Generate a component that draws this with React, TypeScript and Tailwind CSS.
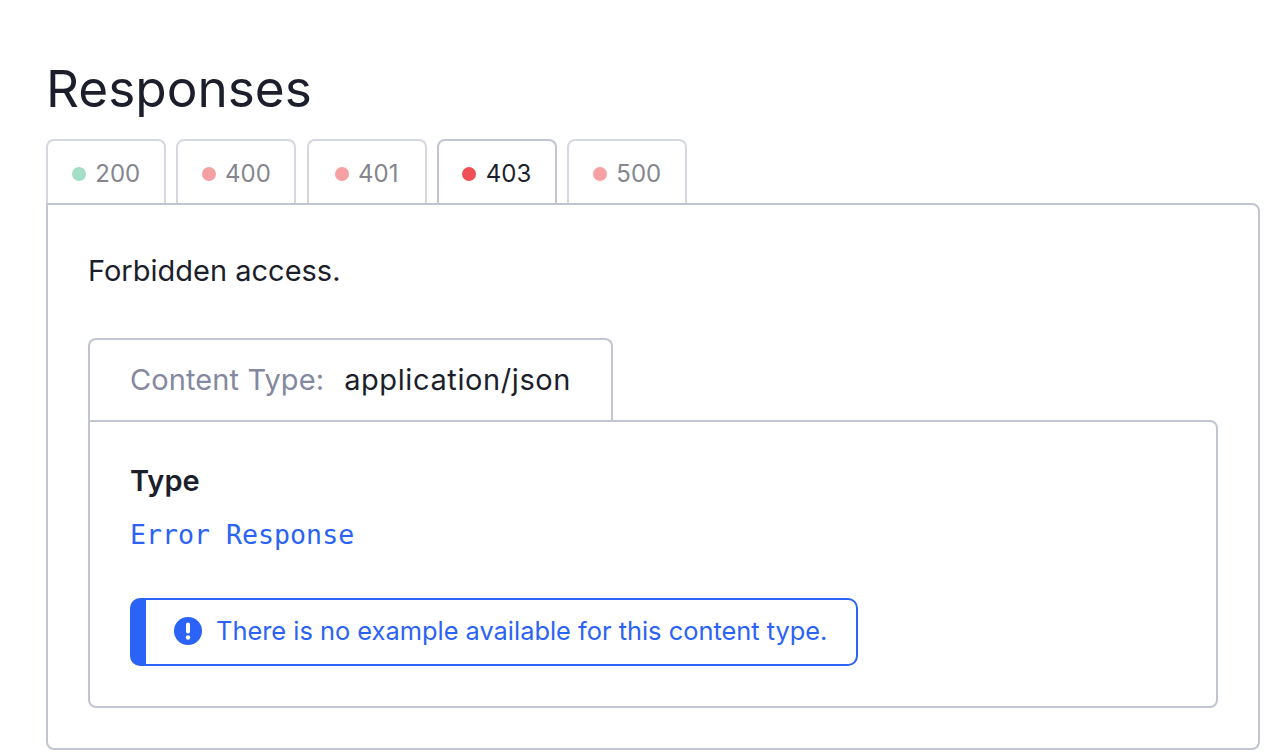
const tabs = [
  { code: "200", dot: "bg-[#a3dfc6]", active: false },
  { code: "400", dot: "bg-[#f5a0a3]", active: false },
  { code: "401", dot: "bg-[#f5a0a3]", active: false },
  { code: "403", dot: "bg-[#ef5055]", active: true },
  { code: "500", dot: "bg-[#f5a0a3]", active: false },
];

export default function App() {
  return (
    <div className="h-[754px] w-[1276px] overflow-hidden bg-white pl-[46px] pr-[16px] pt-[58px] font-['Inter',sans-serif] text-[#1c1f2b]">
      <h2 className="text-[51.3px] font-normal leading-[60px]">Responses</h2>

      {/* Status tabs */}
      <div className="mt-[21px] flex gap-[10.25px]">
        {tabs.map((tab) => (
          <div
            key={tab.code}
            className={`flex h-[64px] w-[120px] items-center justify-center gap-[9.5px] rounded-t-[8px] border-2 border-b-0 bg-white pt-[4px] text-[24px] ${
              tab.active ? "border-[#c1c5d1] text-[#1c1f2b]" : "border-[#d5d8e0] text-[#85868e]"
            }`}
          >
            <span className={`h-[14px] w-[14px] rounded-full ${tab.dot}`} />
            <span>{tab.code}</span>
          </div>
        ))}
      </div>

      {/* Response panel */}
      <div className="h-[547px] rounded-b-[8px] rounded-tr-[8px] border-2 border-[#c1c5d1] px-[40px] pt-[46px]">
        <p className="text-[29px] leading-[40px]">Forbidden access.</p>

        <div className="mt-[47px] flex">
          <div className="flex h-[82px] w-[525px] items-center gap-[20px] rounded-t-[8px] border-2 border-b-0 border-[#c1c5d1] bg-white pl-[40px] text-[29px]">
            <span className="tracking-[0.1px] text-[#8488a0]">Content Type:</span>
            <span className="tracking-[0.6px]">application/json</span>
          </div>
        </div>

        <div className="h-[288px] rounded-b-[8px] rounded-tr-[8px] border-2 border-[#c1c5d1] px-[40px] pt-[41px]">
          <p className="text-[29px] font-semibold leading-[36px]">Type</p>
          <p className="mt-[17px] font-['DejaVu_Sans_Mono',monospace] text-[26.6px] leading-[38px] text-[#2a63f5]">
            Error Response
          </p>

          {/* Notice */}
          <div className="mt-[44px] flex h-[68px] w-[728px] items-center rounded-[10px] border-2 border-l-[16px] border-[#2a63f5] pb-[2px] pl-[27px] text-[25.4px] text-[#2a63f5]">
            <svg width="30" height="30" viewBox="0 0 30 30" className="shrink-0">
              <circle cx="15" cy="15" r="14" fill="#2a63f5" />
              <rect x="13" y="6.5" width="4" height="11" rx="2" fill="#ffffff" />
              <circle cx="15" cy="21.5" r="2.2" fill="#ffffff" />
            </svg>
            <span className="ml-[13px] whitespace-nowrap">There is no example available for this content type.</span>
          </div>
        </div>
      </div>
    </div>
  );
}
